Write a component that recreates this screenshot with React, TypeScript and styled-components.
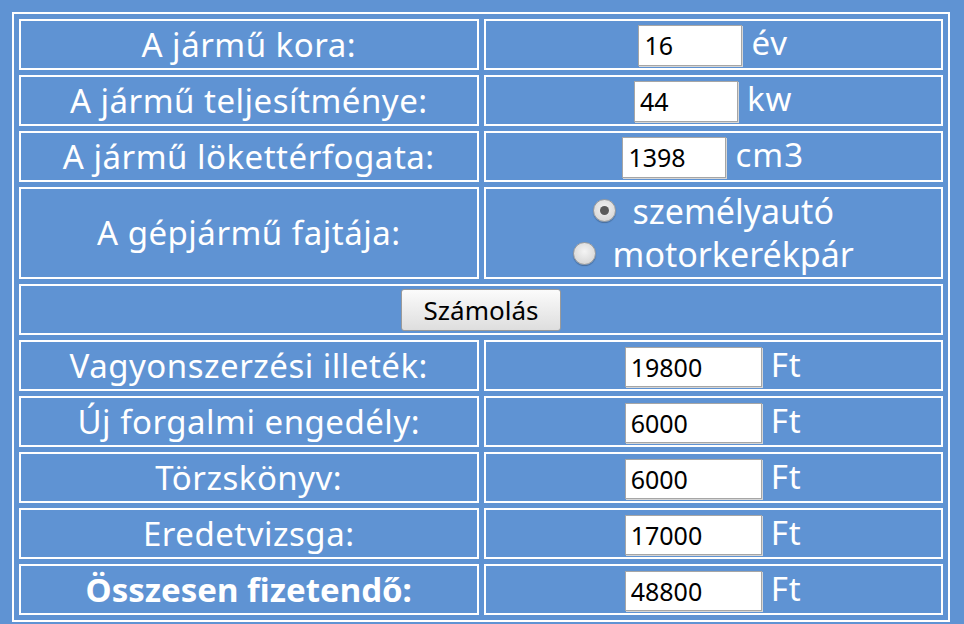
import React, { FC, useState } from "react";
import styled, { createGlobalStyle } from "styled-components";

const GlobalStyle = createGlobalStyle`
  html, body {
    margin: 0;
    padding: 0;
    overflow: hidden;
    background: #5f93d3;
    font-family: "Noto Sans", "Open Sans", sans-serif;
  }
`;

interface Fee {
  label: string;
  value: string;
  bold?: boolean;
}

const fees: Fee[] = [
  { label: "Vagyonszerzési illeték:", value: "19800" },
  { label: "Új forgalmi engedély:", value: "6000" },
  { label: "Törzskönyv:", value: "6000" },
  { label: "Eredetvizsga:", value: "17000" },
  { label: "Összesen fizetendő:", value: "48800", bold: true },
];

export const App: FC = () => {
  const [kind, setKind] = useState("szemelyauto");

  return (
    <>
      <GlobalStyle />
      <Table>
        <tbody>
          <tr>
            <LabelCell>A jármű kora:</LabelCell>
            <ValueCell>
              <Field defaultValue="16" $wide={false} />
              <Unit>év</Unit>
            </ValueCell>
          </tr>
          <tr>
            <LabelCell>A jármű teljesítménye:</LabelCell>
            <ValueCell>
              <Field defaultValue="44" $wide={false} />
              <Unit>kw</Unit>
            </ValueCell>
          </tr>
          <tr>
            <LabelCell>A jármű lökettérfogata:</LabelCell>
            <ValueCell>
              <Field defaultValue="1398" $wide={false} />
              <Unit>cm3</Unit>
            </ValueCell>
          </tr>
          <tr>
            <LabelCell $tall>A gépjármű fajtája:</LabelCell>
            <ValueCell $tall>
              <RadioLine>
                <Radio
                  type="radio"
                  name="fajta"
                  checked={kind === "szemelyauto"}
                  onChange={() => setKind("szemelyauto")}
                />
                személyautó
              </RadioLine>
              <RadioLine>
                <Radio
                  type="radio"
                  name="fajta"
                  checked={kind === "motor"}
                  onChange={() => setKind("motor")}
                />
                motorkerékpár
              </RadioLine>
            </ValueCell>
          </tr>
          <tr>
            <ButtonCell colSpan={2}>
              <CalcButton type="button">Számolás</CalcButton>
            </ButtonCell>
          </tr>
          {fees.map((fee, index) => (
            <tr key={"fee_" + index}>
              <LabelCell $bold={fee.bold}>{fee.label}</LabelCell>
              <ValueCell>
                <Field defaultValue={fee.value} $wide readOnly />
                <Unit>Ft</Unit>
              </ValueCell>
            </tr>
          ))}
        </tbody>
      </Table>
    </>
  );
};

export default App;

const Table = styled.table`
  margin: 12px 0 0 12px;
  width: 938px;
  border: 2px solid #ffffff;
  border-spacing: 5px;
  table-layout: fixed;
`;

const Cell = styled.td<{ $tall?: boolean }>`
  border: 2px solid #ffffff;
  padding: 0;
  height: ${(p) => (p.$tall ? "88px" : "47px")};
  text-align: center;
  vertical-align: middle;
  color: #ffffff;
`;

const LabelCell = styled(Cell)<{ $bold?: boolean }>`
  width: 50%;
  font-size: 33px;
  line-height: 40px;
  font-weight: ${(p) => (p.$bold ? 700 : 400)};
  letter-spacing: ${(p) => (p.$bold ? "0" : "0.5px")};
`;

const ValueCell = styled(Cell)`
  width: 50%;
  font-size: 33px;
  line-height: 40px;
  white-space: nowrap;
`;

const ButtonCell = styled(Cell)``;

const Field = styled.input<{ $wide: boolean }>`
  box-sizing: border-box;
  width: ${(p) => (p.$wide ? "137px" : "104px")};
  height: ${(p) => (p.$wide ? "40px" : "41px")};
  margin: 0;
  padding: 0 5px;
  border: 1px solid #a6a6a6;
  box-shadow: 1px 1px 0 #d6d6d6;
  background: #ffffff;
  color: #000000;
  font-family: "Noto Sans", "Open Sans", sans-serif;
  font-size: 25px;
  letter-spacing: 0;
  vertical-align: baseline;
  outline: none;
`;

const Unit = styled.span`
  margin-left: 9px;
  letter-spacing: 1px;
`;

const RadioLine = styled.label`
  display: block;
  line-height: 43px;
  font-size: 34px;
  color: #ffffff;
`;

const Radio = styled.input`
  appearance: none;
  box-sizing: border-box;
  width: 23px;
  height: 23px;
  margin: 0 17px 0 0;
  border: 1px solid #9c9c9c;
  border-radius: 50%;
  background: radial-gradient(circle at 50% 40%, #f4f4f4 0%, #dadada 70%, #c4c4c4 100%);
  box-shadow: 0 1px 1px rgba(0, 0, 0, 0.25);
  vertical-align: 2px;
  position: relative;

  &:checked::after {
    content: "";
    position: absolute;
    left: 50%;
    top: 50%;
    width: 9px;
    height: 9px;
    margin: -4.5px 0 0 -4.5px;
    border-radius: 50%;
    background: #5a5a5a;
  }
`;

const CalcButton = styled.button`
  box-sizing: border-box;
  width: 160px;
  height: 42px;
  border: 1px solid #9a9a9a;
  border-radius: 3px;
  background: linear-gradient(#fbfbfb, #dedede);
  color: #000000;
  font-family: "Noto Sans", "Open Sans", sans-serif;
  font-size: 26px;
  padding: 0;
  cursor: pointer;
`;
